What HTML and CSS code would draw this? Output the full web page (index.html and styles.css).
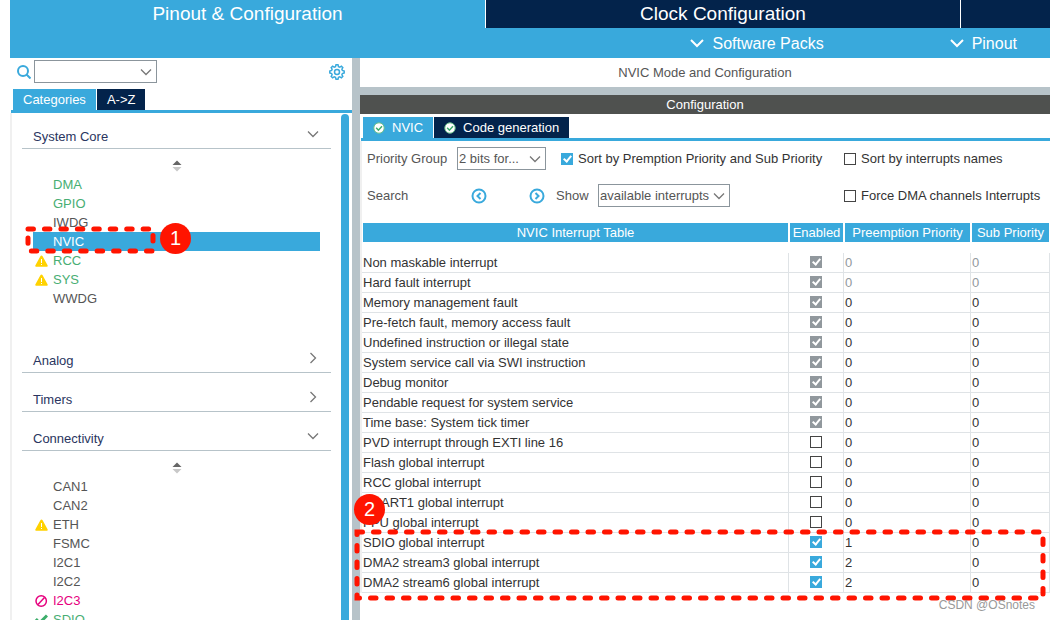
FILE: index.html
```html
<!DOCTYPE html>
<html lang="en">
<head>
    <meta charset="UTF-8">
    <title>Pinout &amp; Configuration</title>
    <link rel="stylesheet" href="styles.css">
</head>
<body>
    <svg class="symbols" aria-hidden="true">
        <symbol id="chevron-down" viewBox="0 0 12 12"><path d="M1 3.5l5 5 5-5" fill="none" stroke="currentColor" stroke-width="1.3"/></symbol>
        <symbol id="chevron-right" viewBox="0 0 12 12"><path d="M3.5 1l5 5-5 5" fill="none" stroke="currentColor" stroke-width="1.3"/></symbol>
        <symbol id="sorter" viewBox="0 0 10 12"><path d="M5 0.5L9.5 5h-9z" fill="#666"/><path d="M5 11.5L9.5 7h-9z" fill="#c8c8c8"/></symbol>
        <symbol id="warning" viewBox="0 0 13 12"><path d="M6.5 0.5Q7.2 0.5 7.6 1.3L12.7 10.4Q13 11.7 11.8 11.7H1.2Q0 11.7 0.3 10.4L5.4 1.3Q5.8 0.5 6.5 0.5z" fill="#ffd200"/><path d="M6.5 4v4M6.5 9v1" stroke="#fff" fill="none"/></symbol>
        <symbol id="blocked" viewBox="0 0 13 12"><circle cx="6.2" cy="6" r="5.2" fill="none" stroke="#e6007e" stroke-width="1.5"/><path d="M9.5 2.5L3 9.5" stroke="#e6007e" stroke-width="1.5"/></symbol>
        <symbol id="done" viewBox="0 0 13 12"><path d="M0.8 5l3.7 4L12 1.5" fill="none" stroke="#3dae6b" stroke-width="3"/></symbol>
        <symbol id="ok" viewBox="0 0 12 12"><circle cx="6" cy="6" r="5.2" fill="#fff" stroke="#6cc08b"/><path d="M3.2 5.8l2.2 2.4 3.6-4" fill="none" stroke="#3dae6b" stroke-width="1.5"/></symbol>
    </svg>

    <div class="app">
        <nav class="main-tabs">
            <button type="button" class="active">Pinout &amp; Configuration</button>
            <button type="button">Clock Configuration</button>
            <button type="button" aria-label="Project Manager"></button>
        </nav>
        <div class="menu-bar">
            <button type="button"><svg viewBox="0 0 14 10"><path d="M1 2l6 6 6-6"/></svg>Software Packs</button>
            <button type="button"><svg viewBox="0 0 14 10"><path d="M1 2l6 6 6-6"/></svg>Pinout</button>
        </div>

        <div class="workspace">
            <aside class="sidebar">
                <div class="finder">
                    <svg class="search-icon" viewBox="0 0 14 14"><circle cx="6" cy="6" r="5"/><path d="M9.5 9.5l4 4"/></svg>
                    <span class="combo combo-find">
                        <select aria-label="Find peripheral"><option></option></select>
                        <svg><use href="#chevron-down"/></svg>
                    </span>
                    <button type="button" class="gear" aria-label="Settings">
                        <svg viewBox="0 0 16 16"><path d="M6.5 2.6L7 0.8h2l0.5 1.8 1.3 0.5 1.6-0.9 1.4 1.4-0.9 1.6 0.5 1.3 1.8 0.5v2l-1.8 0.5-0.5 1.3 0.9 1.6-1.4 1.4-1.6-0.9-1.3 0.5-0.5 1.8H7l-0.5-1.8-1.3-0.5-1.6 0.9-1.4-1.4 0.9-1.6-0.5-1.3L0.8 9V7l1.8-0.5 0.5-1.3-0.9-1.6 1.4-1.4 1.6 0.9z"/><circle cx="8" cy="8" r="2.5"/></svg>
                    </button>
                </div>
                <div class="tabs">
                    <button type="button" class="active">Categories</button>
                    <button type="button">A-&gt;Z</button>
                </div>
                <div class="tree-panel">
                    <div class="tree">
                        <section>
                            <button type="button" class="group">System Core<svg><use href="#chevron-down"/></svg></button>
                            <svg class="sorter"><use href="#sorter"/></svg>
                            <ul>
                                <li class="on"><a href="#dma">DMA</a></li>
                                <li class="on"><a href="#gpio">GPIO</a></li>
                                <li><a href="#iwdg">IWDG</a></li>
                                <li class="selected"><a href="#nvic">NVIC</a></li>
                                <li class="on"><svg><use href="#warning"/></svg><a href="#rcc">RCC</a></li>
                                <li class="on"><svg><use href="#warning"/></svg><a href="#sys">SYS</a></li>
                                <li><a href="#wwdg">WWDG</a></li>
                            </ul>
                        </section>
                        <section>
                            <button type="button" class="group">Analog<svg><use href="#chevron-right"/></svg></button>
                        </section>
                        <section>
                            <button type="button" class="group">Timers<svg><use href="#chevron-right"/></svg></button>
                        </section>
                        <section>
                            <button type="button" class="group">Connectivity<svg><use href="#chevron-down"/></svg></button>
                            <svg class="sorter"><use href="#sorter"/></svg>
                            <ul>
                                <li><a href="#can1">CAN1</a></li>
                                <li><a href="#can2">CAN2</a></li>
                                <li><svg><use href="#warning"/></svg><a href="#eth">ETH</a></li>
                                <li><a href="#fsmc">FSMC</a></li>
                                <li><a href="#i2c1">I2C1</a></li>
                                <li><a href="#i2c2">I2C2</a></li>
                                <li class="conflict"><svg><use href="#blocked"/></svg><a href="#i2c3">I2C3</a></li>
                                <li class="on"><svg><use href="#done"/></svg><a href="#sdio">SDIO</a></li>
                            </ul>
                        </section>
                    </div>
                    <div class="scrollbar"></div>
                </div>
            </aside>

            <main>
                <h1>NVIC Mode and Configuration</h1>
                <h2>Configuration</h2>
                <div class="tabs config-tabs">
                    <button type="button" class="active"><svg><use href="#ok"/></svg>NVIC</button>
                    <button type="button"><svg><use href="#ok"/></svg>Code generation</button>
                </div>
                <div class="config">
                    <div class="options">
                        <label class="name" for="priority-group">Priority Group</label>
                        <span class="combo combo-group">
                            <select id="priority-group"><option>2 bits for...</option></select>
                            <svg><use href="#chevron-down"/></svg>
                        </span>
                        <label class="check"><input type="checkbox" checked>Sort by Premption Priority and Sub Priority</label>
                        <label class="check last"><input type="checkbox">Sort by interrupts names</label>
                    </div>
                    <div class="options">
                        <label class="name search-name" for="search">Search</label>
                        <button type="button" class="step" aria-label="Previous"><svg viewBox="0 0 16 16"><circle cx="8" cy="8" r="6.5"/><path d="M9.5 5L6.5 8l3 3"/></svg></button>
                        <input type="text" id="search">
                        <button type="button" class="step" aria-label="Next"><svg viewBox="0 0 16 16"><circle cx="8" cy="8" r="6.5"/><path d="M6.5 5l3 3-3 3"/></svg></button>
                        <label class="show-name" for="show">Show</label>
                        <span class="combo combo-show">
                            <select id="show"><option>available interrupts</option></select>
                            <svg><use href="#chevron-down"/></svg>
                        </span>
                        <label class="check last"><input type="checkbox">Force DMA channels Interrupts</label>
                    </div>

                    <table>
                        <thead>
                            <tr><th>NVIC Interrupt Table</th><th class="col-enabled">Enabled</th><th class="col-preempt">Preemption Priority</th><th class="col-sub">Sub Priority</th></tr>
                        </thead>
                        <tbody>
                            <tr class="fixed"><td>Non maskable interrupt</td><td><input type="checkbox" aria-label="Enabled" checked disabled></td><td>0</td><td>0</td></tr>
                            <tr class="fixed"><td>Hard fault interrupt</td><td><input type="checkbox" aria-label="Enabled" checked disabled></td><td>0</td><td>0</td></tr>
                            <tr><td>Memory management fault</td><td><input type="checkbox" aria-label="Enabled" checked disabled></td><td>0</td><td>0</td></tr>
                            <tr><td>Pre-fetch fault, memory access fault</td><td><input type="checkbox" aria-label="Enabled" checked disabled></td><td>0</td><td>0</td></tr>
                            <tr><td>Undefined instruction or illegal state</td><td><input type="checkbox" aria-label="Enabled" checked disabled></td><td>0</td><td>0</td></tr>
                            <tr><td>System service call via SWI instruction</td><td><input type="checkbox" aria-label="Enabled" checked disabled></td><td>0</td><td>0</td></tr>
                            <tr><td>Debug monitor</td><td><input type="checkbox" aria-label="Enabled" checked disabled></td><td>0</td><td>0</td></tr>
                            <tr><td>Pendable request for system service</td><td><input type="checkbox" aria-label="Enabled" checked disabled></td><td>0</td><td>0</td></tr>
                            <tr><td>Time base: System tick timer</td><td><input type="checkbox" aria-label="Enabled" checked disabled></td><td>0</td><td>0</td></tr>
                            <tr><td>PVD interrupt through EXTI line 16</td><td><input type="checkbox" aria-label="Enabled"></td><td>0</td><td>0</td></tr>
                            <tr><td>Flash global interrupt</td><td><input type="checkbox" aria-label="Enabled"></td><td>0</td><td>0</td></tr>
                            <tr><td>RCC global interrupt</td><td><input type="checkbox" aria-label="Enabled"></td><td>0</td><td>0</td></tr>
                            <tr><td>USART1 global interrupt</td><td><input type="checkbox" aria-label="Enabled"></td><td>0</td><td>0</td></tr>
                            <tr><td>FPU global interrupt</td><td><input type="checkbox" aria-label="Enabled"></td><td>0</td><td>0</td></tr>
                            <tr><td>SDIO global interrupt</td><td><input type="checkbox" aria-label="Enabled" checked></td><td>1</td><td>0</td></tr>
                            <tr><td>DMA2 stream3 global interrupt</td><td><input type="checkbox" aria-label="Enabled" checked></td><td>2</td><td>0</td></tr>
                            <tr><td>DMA2 stream6 global interrupt</td><td><input type="checkbox" aria-label="Enabled" checked></td><td>2</td><td>0</td></tr>
                        </tbody>
                    </table>
                </div>
            </main>
        </div>
    </div>

    <!-- numbered callouts drawn over the page -->
    <svg class="marks" aria-hidden="true">
        <path d="M28 229H153V251H28z" stroke-dasharray="5.45 11"/>
        <path d="M357 532H1043V598H357z" stroke-dasharray="5.5 11"/>
    </svg>
    <span class="step-mark step-one">1</span>
    <span class="step-mark step-two">2</span>
    <span class="watermark">CSDN @OSnotes</span>
</body>
</html>
```
FILE: styles.css
```css
*, *::after {
    box-sizing: border-box;
}

body {
    margin: 0;
    height: 100vh;
    overflow: hidden;
    position: relative;
    background-color: #ffffff;
    color: #333333;
    font-family: "Liberation Sans", Arial, sans-serif;
    font-size: 13px;
    line-height: 19px;
}

button, select, input {
    margin: 0;
    padding: 0;
    border: none;
    border-radius: 0;
    background: none;
    color: inherit;
    font: inherit;
}

svg {
    display: block;
    flex: none;
}

.symbols {
    position: absolute;
    width: 0;
    height: 0;
}

.app {
    display: flex;
    flex-direction: column;
    height: 100vh;
    margin-left: 10px;
}

/* top tabs */
.main-tabs {
    display: grid;
    grid-template-columns: 475fr 474fr 89fr;
    gap: 1px;
    flex: none;
    height: 28px;
}

.main-tabs button {
    background-color: #03234b;
    color: #ffffff;
    font-size: 19px;
    line-height: 28px;
}

.main-tabs .active {
    background-color: #39a9dc;
}

.menu-bar {
    display: flex;
    justify-content: flex-end;
    gap: 126px;
    flex: none;
    height: 30px;
    padding-right: 33px;
    background-color: #39a9dc;
    color: #ffffff;
}

.menu-bar button {
    display: flex;
    align-items: center;
    gap: 8px;
    font-size: 16px;
}

.menu-bar svg {
    width: 14px;
    height: 10px;
    fill: none;
    stroke: #ffffff;
    stroke-width: 2;
}

.workspace {
    display: flex;
    flex: 1;
    min-height: 0;
}

/* left side */
.sidebar {
    display: flex;
    flex-direction: column;
    flex: none;
    width: 350px;
    border-right: 8px solid #b7c3c9;
}

.finder {
    display: flex;
    align-items: center;
    flex: none;
    height: 31px;
    padding: 0 7px 4px;
}

.search-icon {
    width: 14px;
    height: 14px;
    margin-right: 3px;
    fill: none;
    stroke: #39a9dc;
    stroke-width: 2;
}

.gear {
    margin-left: auto;
}

.gear svg {
    width: 16px;
    height: 16px;
    fill: none;
    stroke: #39a9dc;
    stroke-width: 1.5;
}

.combo {
    position: relative;
    flex: none;
    height: 23px;
    color: #555555;
}

.combo select {
    appearance: none;
    width: 100%;
    height: 100%;
    padding-left: 1px;
    border: 1px solid #8b959c;
    background-color: #ffffff;
}

.combo svg {
    position: absolute;
    top: 6px;
    right: 5px;
    width: 12px;
    height: 12px;
    color: #777777;
    pointer-events: none;
}

.combo-find {
    width: 123px;
}

.combo-group {
    width: 89px;
}

.combo-show {
    width: 132px;
}

.tabs {
    display: flex;
    gap: 1px;
    flex: none;
    margin-left: 1px;
    padding-left: 2px;
    border-bottom: 3px solid #39a9dc;
}

.tabs button {
    display: flex;
    align-items: center;
    height: 21px;
    padding: 0 10px;
    background-color: #03234b;
    color: #ffffff;
}

.tabs .active {
    background-color: #39a9dc;
}

.tree-panel {
    display: flex;
    flex: 1;
    min-height: 0;
    overflow: hidden;
    border-left: 2px solid #f0f0f0;
}

.tree {
    flex: 1;
    padding: 0 10px;
}

.scrollbar {
    width: 8px;
    margin: 1px 3px 0 0;
    border-radius: 4px 4px 0 0;
    background-color: #39a9dc;
}

.tree section + section {
    margin-top: 3px;
}

.group {
    display: flex;
    align-items: center;
    justify-content: space-between;
    width: 100%;
    height: 36px;
    padding: 12px 12px 0 11px;
    border-bottom: 1px solid #b7c3c9;
    color: #2a3560;
}

.group svg {
    width: 12px;
    height: 12px;
    margin-bottom: 6px;
    color: #777777;
}

.sorter {
    width: 10px;
    height: 12px;
    margin: 11px auto 3px;
}

.tree ul {
    margin: 0;
    padding: 0 11px 26px;
    list-style: none;
}

.tree li {
    display: flex;
    justify-content: flex-end;
    align-items: center;
    color: #555555;
}

.tree li svg {
    width: 13px;
    height: 12px;
    margin: 0 5px 0 2px;
}

.tree li a {
    width: calc(100% - 20px);
    color: inherit;
    text-decoration: none;
}

.tree .on {
    color: #48ae73;
}

.tree .conflict {
    color: #e6007e;
}

.tree .selected {
    background-color: #39a9dc;
    color: #ffffff;
}

/* right side */
main {
    flex: 1;
    min-width: 0;
}

h1, h2 {
    margin: 0;
    font-size: 13px;
    font-weight: normal;
    text-align: center;
}

h1 {
    height: 37px;
    border-bottom: 8px solid #b7c3c9;
    color: #555555;
    line-height: 29px;
}

h2 {
    background-color: #4f514f;
    color: #ffffff;
}

.config-tabs {
    margin-top: 3px;
}

.config-tabs svg {
    width: 12px;
    height: 12px;
    margin-right: 7px;
}

.config {
    padding-top: 6px;
    border-left: 2px solid #f0f0f0;
}

.options {
    display: flex;
    align-items: center;
    height: 23px;
    margin-bottom: 14px;
    padding-left: 5px;
}

.name, .show-name {
    flex: none;
    width: 90px;
    color: #555555;
}

.search-name {
    width: 104px;
}

.show-name {
    width: 42px;
    margin-left: 11px;
}

.check {
    display: flex;
    align-items: center;
    gap: 5px;
    margin-left: 15px;
    white-space: nowrap;
}

.last {
    width: 206px;
    margin-left: auto;
}

.step svg {
    width: 16px;
    height: 16px;
    fill: none;
    stroke: #39a9dc;
    stroke-width: 2;
}

#search {
    width: 42px;
    outline: none;
}

input[type="checkbox"] {
    appearance: none;
    display: block;
    position: relative;
    flex: none;
    width: 12px;
    height: 12px;
    border: 1px solid #444444;
    background-color: #ffffff;
}

input[type="checkbox"]:checked {
    border-color: #39a9dc;
    background-color: #39a9dc;
}

input[type="checkbox"]:checked:disabled {
    border-color: #91989d;
    background-color: #91989d;
}

input[type="checkbox"]:checked::after {
    content: "";
    position: absolute;
    top: 0;
    left: 3px;
    width: 5px;
    height: 8px;
    border: solid #ffffff;
    border-width: 0 2px 2px 0;
    transform: rotate(40deg);
}

table {
    width: 100%;
    margin-top: 16px;
    border-spacing: 0;
    table-layout: fixed;
}

th {
    height: 30px;
    padding: 0;
    border: 1px solid #ffffff;
    border-width: 0 1px 11px;
    background-color: #39a9dc;
    background-clip: padding-box;
    color: #ffffff;
    font-weight: normal;
}

.col-enabled {
    width: 55px;
}

.col-preempt {
    width: 127px;
}

.col-sub {
    width: 79px;
}

td {
    height: 20px;
    padding: 0 1px;
    border: 1px solid #dfe3e6;
    border-width: 0 1px 1px 0;
    vertical-align: top;
}

td input[type="checkbox"] {
    margin: 3px auto 0;
}

.fixed td + td {
    color: #91989d;
}

/* callouts */
.marks {
    position: absolute;
    top: 0;
    left: 0;
    width: 100%;
    height: 100%;
    fill: none;
    stroke: #ff1400;
    stroke-width: 5;
    stroke-linecap: round;
    pointer-events: none;
}

.step-mark {
    position: absolute;
    width: 31px;
    height: 31px;
    border-radius: 50%;
    background-color: #ff1400;
    color: #ffffff;
    font-size: 20px;
    line-height: 31px;
    text-align: center;
}

.step-one {
    top: 223px;
    left: 160px;
}

.step-two {
    top: 494px;
    left: 354px;
}

.watermark {
    position: absolute;
    right: 15px;
    bottom: 5px;
    color: #999999;
    font-size: 12px;
}
```
